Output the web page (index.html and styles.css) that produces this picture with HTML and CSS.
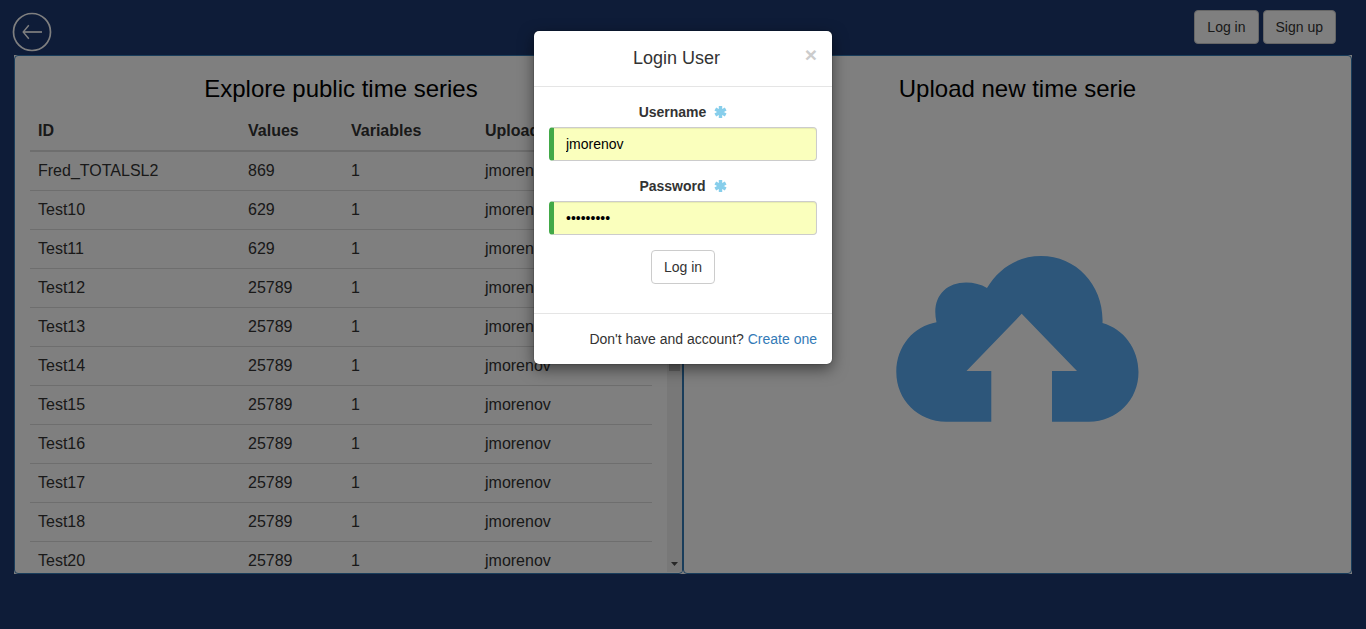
FILE: index.html
```
<!DOCTYPE html>
<html lang="en">
<head>
<meta charset="utf-8">
<title>Time series</title>
<link rel="stylesheet" href="styles.css">
</head>
<body>
<header class="topbar">
  <a class="back" href="#" aria-label="Back">
    <svg width="40" height="40" viewBox="0 0 40 40" fill="none" stroke="#fff"><circle cx="20" cy="20" r="18.500" stroke-width="1.700"/><path d="M30 20H11.500" stroke-width="1.700"/><path d="M16.800 13.200L11.200 20l5.600 6.800" stroke-width="1.400"/></svg>
  </a>
  <nav class="actions"><button class="btn" type="button">Log in</button><button class="btn" type="button">Sign up</button></nav>
</header>
<main class="panels">
  <section class="panel">
    <div class="list">
      <h3 class="title">Explore public time series</h3>
      <table class="series">
        <thead><tr><th class="c-id">ID</th><th class="c-values">Values</th><th class="c-vars">Variables</th><th>Uploaded by</th></tr></thead>
        <tbody>
          <tr><td>Fred_TOTALSL2</td><td>869</td><td>1</td><td>jmorenov</td></tr>
          <tr><td>Test10</td><td>629</td><td>1</td><td>jmorenov</td></tr>
          <tr><td>Test11</td><td>629</td><td>1</td><td>jmorenov</td></tr>
          <tr><td>Test12</td><td>25789</td><td>1</td><td>jmorenov</td></tr>
          <tr><td>Test13</td><td>25789</td><td>1</td><td>jmorenov</td></tr>
          <tr><td>Test14</td><td>25789</td><td>1</td><td>jmorenov</td></tr>
          <tr><td>Test15</td><td>25789</td><td>1</td><td>jmorenov</td></tr>
          <tr><td>Test16</td><td>25789</td><td>1</td><td>jmorenov</td></tr>
          <tr><td>Test17</td><td>25789</td><td>1</td><td>jmorenov</td></tr>
          <tr><td>Test18</td><td>25789</td><td>1</td><td>jmorenov</td></tr>
          <tr><td>Test20</td><td>25789</td><td>1</td><td>jmorenov</td></tr>
        </tbody>
      </table>
    </div>
    <div class="scrollbar">
      <div class="thumb"></div>
      <svg class="down" width="7" height="4" viewBox="0 0 7 4"><path d="M0 0h7L3.500 4z" fill="#505050"/></svg>
    </div>
  </section>
  <section class="panel upload">
    <h3 class="title">Upload new time serie</h3>
    <svg class="cloud" width="244" height="168" viewBox="0 0 244 168"><path d="M50 166.700C22 166.700 .3 145 .3 117C.3 91 18 71 40.500 67.300C35 43 49 27.500 70 27.500Q82 27.500 91 33C103 13 122 1 145 1C181 1 208 31 206.500 68C228 74 242.500 94 242.500 117C242.500 145 221 166.700 193 166.700H156V116H181L125.700 58.800L70.500 116H95.300V166.700Z" fill="#5aacf4"/></svg>
  </section>
</main>
<div class="backdrop">
  <div class="modal" role="dialog">
    <div class="modal-head"><h4 class="modal-title">Login User</h4><button class="close" type="button">×</button></div>
    <form class="modal-body">
      <label class="label" for="user">Username <svg class="star" width="13" height="12" viewBox="0 0 13 12"><path d="M6.500 0v12M1.300 3l10.400 6M1.300 9l10.400-6"/></svg></label>
      <input class="field" id="user" type="text" value="jmorenov">
      <label class="label" for="pass">Password <svg class="star" width="13" height="12" viewBox="0 0 13 12"><path d="M6.500 0v12M1.300 3l10.400 6M1.300 9l10.400-6"/></svg></label>
      <input class="field" id="pass" type="password" value="timeserie">
      <button class="btn submit" type="button">Log in</button>
    </form>
    <div class="modal-foot">Don't have and account? <a class="link" href="#">Create one</a></div>
  </div>
</div>
</body>
</html>
```
FILE: styles.css
```
* { box-sizing: border-box; }
body {
  margin: 0;
  height: 629px;
  overflow: hidden;
  background: #1c3871;
  color: #333;
  font: 14px/20px "Liberation Sans", Arial, sans-serif;
}
.topbar { display: flex; justify-content: space-between; height: 55px; padding: 10px 30px 0 12px; }
.back { width: 40px; height: 40px; margin-top: 2px; }
.back svg { display: block; }
.actions { display: flex; gap: 4px; align-items: flex-start; }
.btn {
  height: 34px;
  padding: 6px 12px;
  border: 1px solid #ccc;
  border-radius: 4px;
  background: #fff;
  color: #333;
  font: inherit;
}
.panels { display: flex; width: 1338px; height: 519px; margin-left: 14px; background: #fff; }
.panel {
  display: flex;
  width: 669px;
  border: 1px solid #337ab7;
  border-radius: 4px;
  overflow: hidden;
}
.list { width: 652px; padding: 0 15px; overflow: hidden; }
.title { margin: 20px 0 10px; color: #000; font-size: 24px; line-height: 26px; font-weight: 400; text-align: center; }
.series {
  width: 622px;
  table-layout: fixed;
  border-spacing: 0;
  font-size: 16px;
  line-height: 22px;
}
.c-id { width: 210px; }
.c-values { width: 103px; }
.c-vars { width: 134px; }
.series th { height: 40px; padding: 8px; border-bottom: 2px solid #ddd; text-align: left; }
.series td { height: 39px; padding: 8px; border-top: 1px solid #ddd; }
.series tbody tr:first-child td { height: 38px; border-top: 0; }
.scrollbar {
  display: flex;
  flex-direction: column;
  justify-content: space-between;
  align-items: center;
  width: 15px;
  height: 516px;
  padding: 16px 0 6px;
  background: #f1f1f1;
}
.thumb { width: 11px; height: 299px; background: #c1c1c1; }
.upload { flex-direction: column; align-items: center; }
.cloud { display: block; margin-top: 143px; }
.backdrop {
  position: absolute;
  inset: 0;
  display: flex;
  justify-content: center;
  align-items: flex-start;
  padding-top: 31px;
  background: rgba(0, 0, 0, .5);
}
.modal { width: 298px; height: 333px; border-radius: 5px; background: #fff; box-shadow: 0 5px 15px rgba(0, 0, 0, .5), 0 0 1px #000; }
.modal-head {
  display: grid;
  grid-template-columns: 1fr 16px;
  height: 56px;
  padding: 15px 13px 15px 16px;
  border-bottom: 1px solid #e5e5e5;
}
.modal-title { margin: 0; font-size: 18px; line-height: 24px; font-weight: 400; text-align: center; }
.close { width: 16px; height: 21px; margin-top: -2px; padding: 0; border: 0; background: none; color: #ccc; font: bold 21px/21px "Liberation Sans", Arial, sans-serif; }
.modal-body { display: flex; flex-direction: column; align-items: center; height: 227px; padding: 15px; border-bottom: 1px solid #e5e5e5; }
.label { display: flex; align-items: center; gap: 8px; height: 20px; margin-bottom: 5px; font-weight: 700; }
.star { stroke: #87ceeb; stroke-width: 3.4; }
.field {
  width: 268px;
  height: 34px;
  margin: 0 0 15px;
  padding: 6px 12px;
  border: 1px solid #ccc;
  border-left: 5px solid #42a948;
  border-radius: 4px;
  background: #faffbd;
  color: #000;
  font: inherit;
  box-shadow: inset 0 1px 1px rgba(0, 0, 0, .075);
}
.modal-foot { padding: 15px; text-align: right; }
.link { color: #337ab7; text-decoration: none; }
```
